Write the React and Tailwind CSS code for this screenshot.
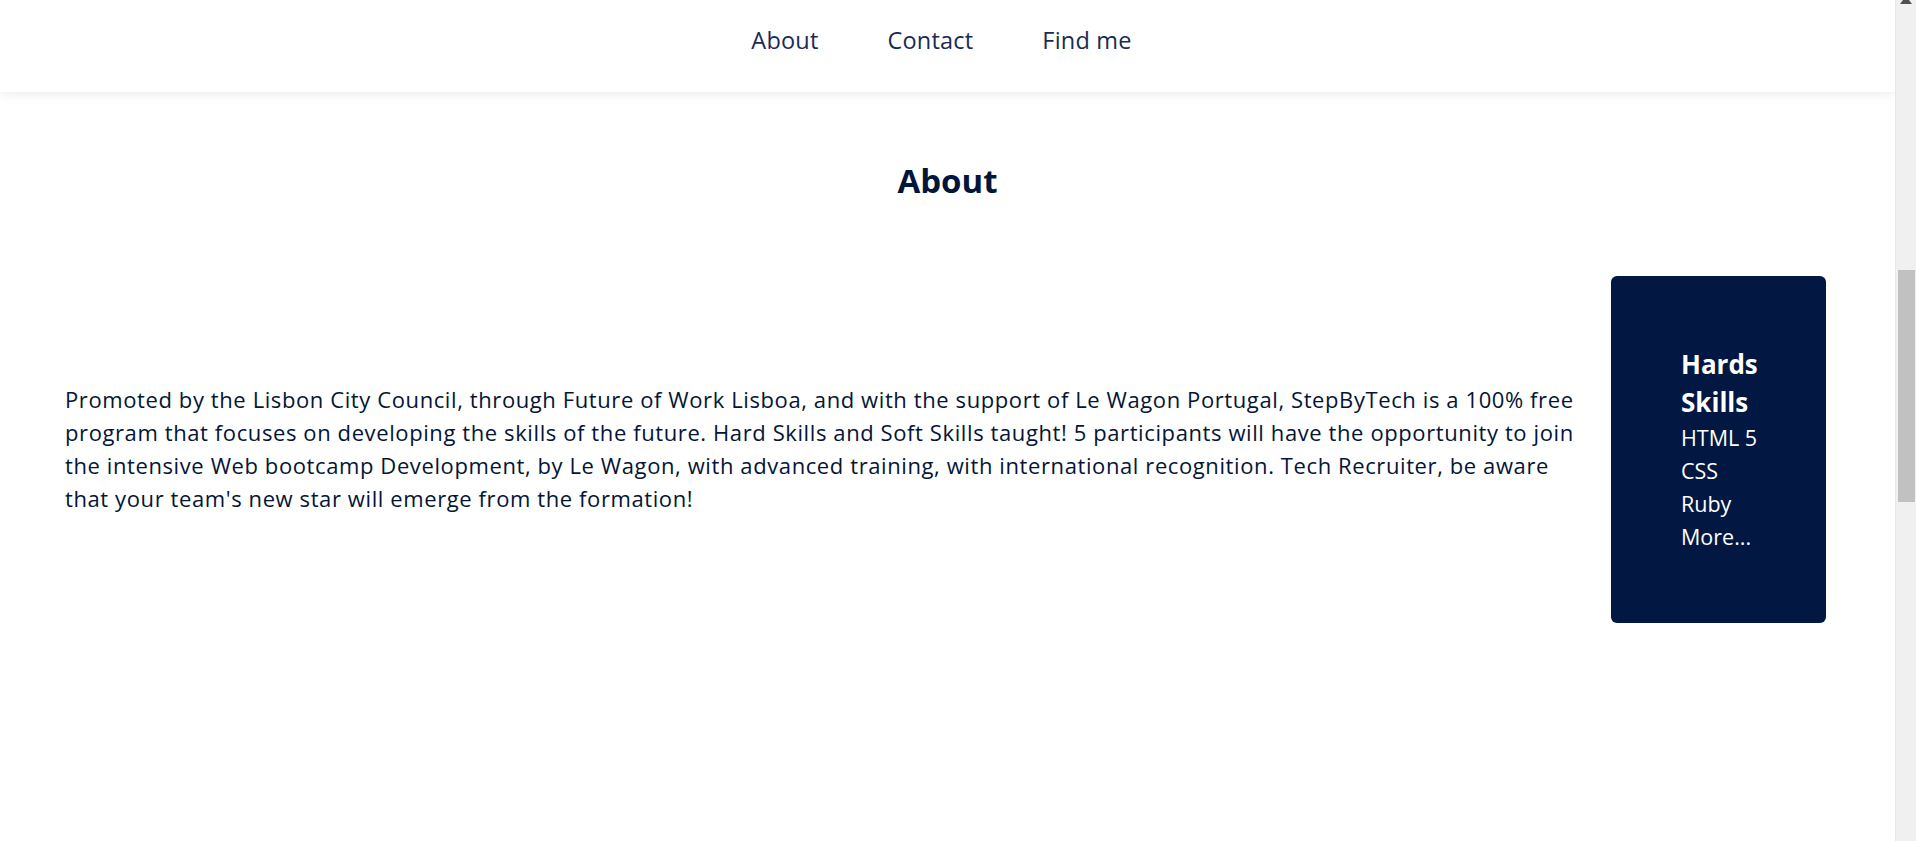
import React from "react";

const skills = ["HTML 5", "CSS", "Ruby", "More..."];

const App = () => {
  return (
    <div className="flex h-[841px] overflow-hidden bg-white font-['Open_Sans',sans-serif]">
      <div className="flex-1 flex flex-col min-w-0">
        {/* Header */}
        <header className="h-[92px] shrink-0 bg-white shadow-[0_3px_10px_rgba(0,0,0,0.07)] flex items-center justify-center gap-[69px] pr-[12px] pb-[10px]">
          <a className="text-[23.5px] tracking-[0.2px] text-[#1a2a56] cursor-pointer">About</a>
          <a className="text-[23.5px] tracking-[0.2px] text-[#1a2a56] cursor-pointer">Contact</a>
          <a className="text-[23.5px] tracking-[0.2px] text-[#1a2a56] cursor-pointer">Find me</a>
        </header>

        {/* About section */}
        <main className="flex flex-col">
          <h1 className="mt-[64px] text-center text-[33px] font-bold text-[#021639]">About</h1>
          <div className="mt-[70px] flex items-center gap-[35px] pl-[65px] pr-[69px]">
            <p className="flex-1 text-[22px] tracking-[0.6px] leading-[33px] text-[#041536]">
              Promoted by the Lisbon City Council, through Future of Work Lisboa, and with the support of Le Wagon Portugal, StepByTech is a 100% free program that focuses on developing the skills of the future. Hard Skills and Soft Skills taught! 5 participants will have the opportunity to join the intensive Web bootcamp Development, by Le Wagon, with advanced training, with international recognition. Tech Recruiter, be aware that your team's new star will emerge from the formation!
            </p>
            <div className="w-[215px] h-[347px] shrink-0 rounded-md bg-[#021842] flex flex-col justify-center pl-[70px]">
              <h3 className="text-[26px] leading-[38px] font-bold text-white">
                Hards
                <br />
                Skills
              </h3>
              <ul className="text-[21.5px] leading-[33px] text-white">
                {skills.map((s, i) => (
                  <li key={i}>{s}</li>
                ))}
              </ul>
            </div>
          </div>
        </main>
      </div>

      {/* Scrollbar */}
      <div className="w-[21px] shrink-0 bg-[#f0f0f0] border-l border-[#e8e8e8] flex flex-col items-center">
        <div className="mt-[-4px] w-0 h-0 border-l-[6px] border-r-[6px] border-b-[8px] border-l-transparent border-r-transparent border-b-[#505050]" />
        <div className="mt-[266px] w-[17px] h-[232px] bg-[#c1c1c1]" />
      </div>
    </div>
  );
};

export default App;
